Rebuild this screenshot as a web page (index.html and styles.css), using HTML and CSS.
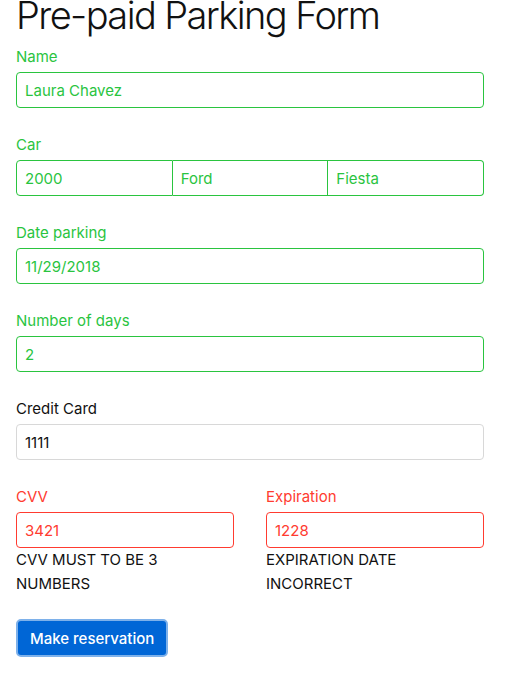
FILE: index.html
```html
<!DOCTYPE html>
<html>
<head>
<meta charset="utf-8">
<link rel="stylesheet" href="styles.css">
</head>
<body>
<div class="container">
  <h1 class="title">Pre-paid Parking Form</h1>
  <form class="form">
    <div class="group valid">
      <label class="label">Name</label>
      <input class="input" value="Laura Chavez">
    </div>
    <div class="group valid">
      <label class="label">Car</label>
      <div class="input-row">
        <input class="input joined first" value="2000">
        <input class="input joined mid" value="Ford">
        <input class="input joined last" value="Fiesta">
      </div>
    </div>
    <div class="group valid">
      <label class="label">Date parking</label>
      <input class="input" value="11/29/2018">
    </div>
    <div class="group valid">
      <label class="label">Number of days</label>
      <input class="input" value="2">
    </div>
    <div class="group">
      <label class="label">Credit Card</label>
      <input class="input" value="1111">
    </div>
    <div class="cols">
      <div class="group invalid">
        <label class="label">CVV</label>
        <input class="input" value="3421">
        <div class="feedback">CVV MUST TO BE 3 NUMBERS</div>
      </div>
      <div class="group invalid">
        <label class="label">Expiration</label>
        <input class="input" value="1228">
        <div class="feedback">EXPIRATION DATE INCORRECT</div>
      </div>
    </div>
    <button type="button" class="btn">Make reservation</button>
  </form>
</div>
</body>
</html>
```
FILE: styles.css
```css
html, body {
  margin: 0;
  padding: 0;
  background: #fff;
}
body {
  font-family: Inter, "Liberation Sans", Arial, sans-serif;
  font-size: 16px;
  line-height: 24px;
  color: #111;
}
.container {
  width: 468px;
  padding: 0 16px;
}
.title {
  font-size: 38px;
  font-weight: 300;
  line-height: 48px;
  margin: -9px 0 6px;
  color: #111;
  letter-spacing: -1.6px;
}
.form {
  display: flex;
  flex-direction: column;
}
.group {
  display: flex;
  flex-direction: column;
  margin-bottom: 25px;
}
.cols .group {
  margin-bottom: 23px;
}
.label {
  display: block;
  margin-bottom: 3px;
  font-size: 15px;
}
.input {
  box-sizing: border-box;
  height: 36px;
  width: 100%;
  margin: 0;
  padding: 0 8px;
  border: 1px solid #d8d8d8;
  border-radius: 4px;
  font-family: inherit;
  font-size: 15px;
  color: #111;
  background: #fff;
  outline: none;
}
.input-row {
  display: flex;
}
.input.joined {
  flex: 1;
  min-width: 0;
}
.input.first {
  border-radius: 4px 0 0 4px;
}
.input.mid {
  border-radius: 0;
  border-left: none;
}
.input.last {
  border-radius: 0 4px 4px 0;
  border-left: none;
}
.valid .label,
.valid .input {
  color: #2ac43f;
}
.valid .input {
  border-color: #2ac43f;
}
.invalid .label,
.invalid .input {
  color: #ff3b30;
}
.invalid .input {
  border-color: #ff3b30;
}
.cols {
  display: grid;
  grid-template-columns: 1fr 1fr;
  column-gap: 32px;
}
.feedback {
  font-size: 15px;
  color: #111;
}
.btn {
  align-self: flex-start;
  box-sizing: border-box;
  height: 38px;
  padding: 0 12px;
  border: 2px solid #7eb1ea;
  border-radius: 5px;
  background: #0066d6;
  color: #fff;
  font-family: inherit;
  font-size: 15px;
  font-weight: 500;
}
```
